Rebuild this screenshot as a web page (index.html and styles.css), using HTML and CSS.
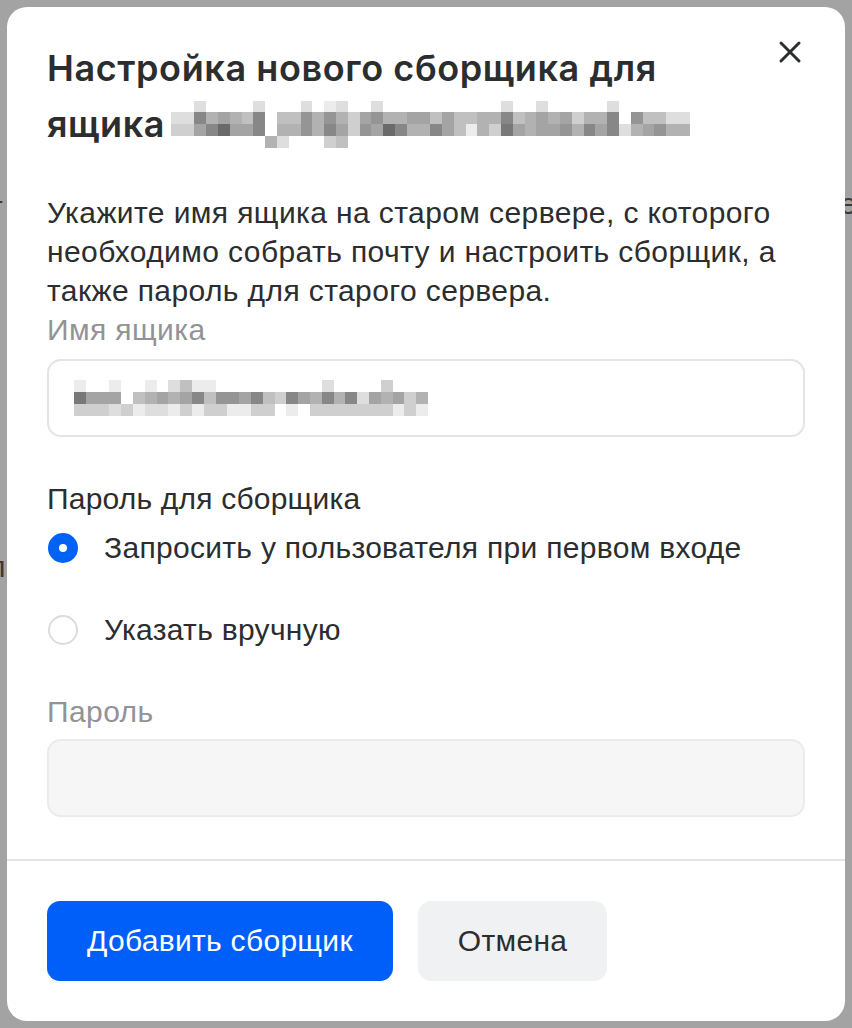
FILE: index.html
```html
<!DOCTYPE html>
<html lang="ru">
<head>
  <meta charset="UTF-8">
  <title>Настройка нового сборщика</title>
  <link rel="stylesheet" href="styles.css">
</head>
<body>
  <div class="backdrop">
    <span class="bg-text bg-1">т</span>
    <span class="bg-text bg-2">е</span>
    <span class="bg-text bg-3">л</span>
  </div>

  <div class="modal">
    <button class="close" aria-label="Закрыть">
      <svg width="24" height="24" viewBox="0 0 24 24" fill="none">
        <path d="M3 3L21 21M21 3L3 21" stroke="#2c2d2e" stroke-width="3" stroke-linecap="round"/>
      </svg>
    </button>

    <div class="content">
      <h1 class="title">Настройка нового сборщика для ящика <span class="pixels pixels-title" data-rows="title"></span></h1>

      <p class="text">Укажите имя ящика на старом сервере, с которого необходимо собрать почту и настроить сборщик, а также пароль для старого сервера.</p>

      <label class="field-label">Имя ящика</label>
      <div class="input">
        <span class="pixels" data-rows="mail"></span>
      </div>

      <div class="group-label">Пароль для сборщика</div>
      <div class="radio-row">
        <span class="radio checked"></span>
        <span>Запросить у пользователя при первом входе</span>
      </div>
      <div class="radio-row">
        <span class="radio"></span>
        <span>Указать вручную</span>
      </div>

      <label class="field-label pass-label">Пароль</label>
      <div class="input disabled"></div>
    </div>

    <div class="footer">
      <button class="btn btn-primary">Добавить сборщик</button>
      <button class="btn btn-secondary">Отмена</button>
    </div>
  </div>

  <script>
    // blurred (pixelated) addresses
    const rows = {
      title: [
        "..b....b...b.ab..b..........b..b.....b......",
        "bbhefedh.ddgegecfgeeffdfddeehdefefceeh.gddbb",
        "ccfhjffh.eegehfcgfjheehfdaecifeffgehfhbefgee",
        "........eb...cd............................."
      ],
      mail: [
        "a..a..a.bdaa.........b....c...",
        "ifff.defefhdggfhdchfehehbfefce",
        "cccbcabbacaccaacc.a.cccccccaca"
      ]
    };

    document.querySelectorAll(".pixels").forEach(el => {
      rows[el.dataset.rows].forEach(line => {
        const row = document.createElement("span");
        row.className = "px-row";
        for (const ch of line) {
          const cell = document.createElement("span");
          cell.className = "px" + (ch === "." ? "" : " px-" + ch);
          row.appendChild(cell);
        }
        el.appendChild(row);
      });
    });
  </script>
</body>
</html>
```

FILE: styles.css
```css
body {
  margin: 0;
  height: 1028px;
  background: #a3a3a3;
  font-family: "Liberation Sans", Arial, sans-serif;
  color: #2c2d2e;
  overflow: hidden;
  position: relative;
}

.backdrop {
  position: absolute;
  inset: 0;
}
.bg-text {
  position: absolute;
  font-size: 30px;
  color: #3a3a3c;
}
.bg-1 { left: -11px; top: 190px; }
.bg-2 { left: 840px; top: 187px; }
.bg-3 { left: -12px; top: 550px; }

.modal {
  position: relative;
  margin: 7px;
  height: 1014px;
  background: #fff;
  border-radius: 20px;
  display: flex;
  flex-direction: column;
  box-sizing: border-box;
}

.close {
  position: absolute;
  top: 33px;
  right: 43px;
  width: 24px;
  height: 24px;
  padding: 0;
  border: none;
  background: none;
}

.content {
  padding: 33px 40px 0;
  flex: 1;
}

.title {
  margin: 0 60px 0 0;
  font-family: Inter, "Noto Sans", sans-serif;
  font-weight: 600;
  font-size: 36px;
  line-height: 56px;
  letter-spacing: 0.6px;
}

.pixels {
  display: inline-flex;
  flex-direction: column;
  vertical-align: middle;
}
.pixels-title {
  margin-left: -4px;
  position: relative;
  top: -3px;
}
.px-row {
  display: flex;
}
.px {
  width: 11.8px;
  height: 11.7px;
}
.px-a { background: #ececec; }
.px-b { background: #dedede; }
.px-c { background: #cfcfcf; }
.px-d { background: #c0c0c0; }
.px-e { background: #b2b2b2; }
.px-f { background: #a4a4a4; }
.px-g { background: #959595; }
.px-h { background: #878787; }
.px-i { background: #787878; }
.px-j { background: #6a6a6a; }

.text {
  margin: 41px 0 0;
  font-size: 30px;
  line-height: 39px;
  letter-spacing: 0.4px;
}

.field-label {
  display: block;
  font-size: 30px;
  line-height: 39px;
  letter-spacing: 0.4px;
  color: #929396;
}

.input {
  margin-top: 10px;
  height: 78px;
  box-sizing: border-box;
  border: 2px solid #e4e4e6;
  border-radius: 14px;
  display: flex;
  align-items: center;
  padding-left: 25px;
}
.input.disabled {
  margin-top: 8px;
  background: #f6f6f7;
  border-color: #ebebec;
}

.group-label {
  margin-top: 42px;
  font-size: 30px;
  line-height: 39px;
  letter-spacing: 0.2px;
}

.radio-row {
  display: flex;
  align-items: center;
  gap: 26px;
  margin-top: 10px;
  font-size: 30px;
  line-height: 39px;
  letter-spacing: 0.3px;
}
.radio-row + .radio-row {
  margin-top: 43px;
}

.radio {
  width: 30px;
  height: 30px;
  box-sizing: border-box;
  border-radius: 50%;
  border: 2px solid #dcdcde;
  flex-shrink: 0;
  margin-left: 1px;
}
.radio.checked {
  border: 11px solid #0062f5;
  background: #fff;
}

.pass-label {
  margin-top: 43px;
}

.footer {
  border-top: 2px solid #e4e4e6;
  padding: 40px 40px 40px;
  display: flex;
  gap: 25px;
}

.btn {
  height: 80px;
  padding: 0 40px;
  border: none;
  border-radius: 13px;
  font-family: "Liberation Sans", Arial, sans-serif;
  font-size: 30px;
  letter-spacing: 0.3px;
}
.btn-primary {
  background: #005ff9;
  color: #fff;
}
.btn-secondary {
  background: #f0f1f3;
  color: #2c2d2e;
}
```
